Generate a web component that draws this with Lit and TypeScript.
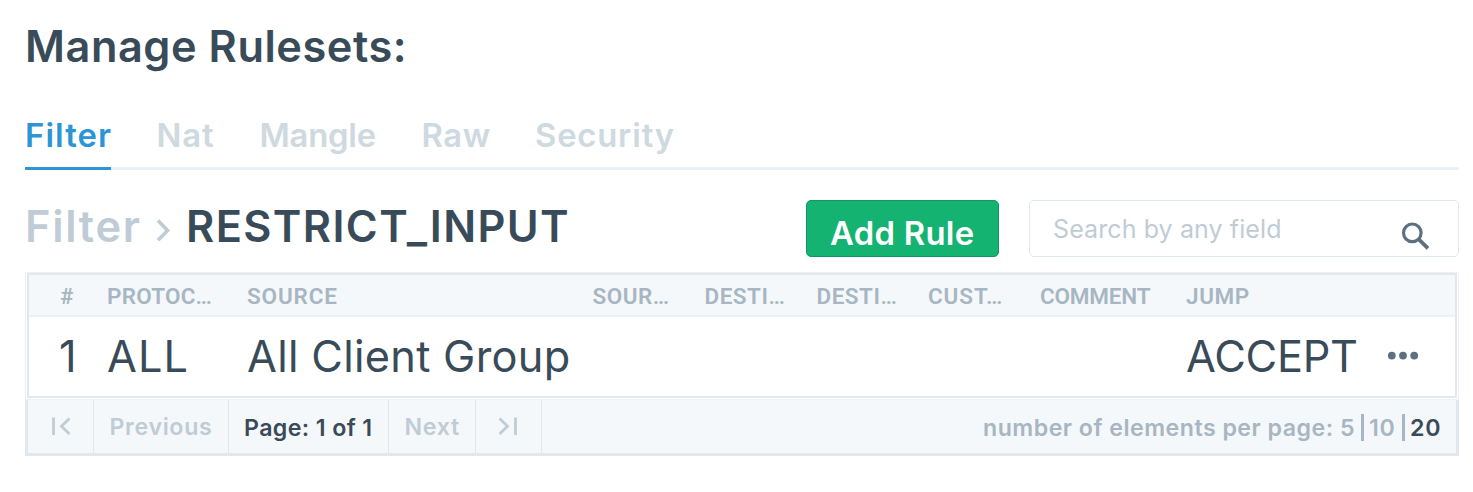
import { LitElement, html, css } from "lit";
import { customElement, state } from "lit/decorators.js";
import { classMap } from "lit/directives/class-map.js";

@customElement("app-root")
export class AppRoot extends LitElement {
  static styles = css`
    * { box-sizing: border-box; }
    :host {
      box-sizing: border-box;
      display: block; width: 1473px; height: 492px; overflow: hidden; background: #fff;
      padding: 20px 14px 0 25px; color: #394b59;
      font-family: Inter, Roboto, "Liberation Sans", sans-serif;
      white-space: nowrap;
    }
    svg { display: block; }
    h1 { margin: 0; font-size: 43.3px; font-weight: 600; line-height: 52px; letter-spacing: .55px; }
    .tabs {
      display: grid; grid-template-columns: 131.5px 103px 162px 113.5px auto; margin-top: 38px; height: 60px;
      box-shadow: inset 0 -3px #ebf1f5; font-size: 32.8px; font-weight: 600; line-height: 50px; color: #ced9e0;
    }
    .tab.active { width: 86px; color: #2b95d6; border-bottom: 3px solid #2b95d6; }
    .filter { letter-spacing: 1.1px; }
    .nat { letter-spacing: .9px; }
    .mangle { letter-spacing: -.2px; }
    .raw { letter-spacing: .6px; }
    .security { letter-spacing: .8px; }

    .bar { display: flex; margin-top: 30px; height: 57px; }
    .crumbs { display: flex; width: 781px; font-size: 43.3px; font-weight: 600; line-height: 52px; }
    .parent { width: 131px; color: #bfccd6; letter-spacing: 1.7px; }
    .sep { width: 30px; padding-top: 19px; }
    .chain { letter-spacing: 1.4px; }
    .add {
      width: 193px; height: 57px; margin: 0 30px 0 0; padding: 8px 0 0 23px; border: 1px solid #0f9960; border-radius: 5px;
      background: #15b371; color: #fff; font: 600 32.8px/48px Inter, sans-serif; letter-spacing: .3px; text-align: left;
    }
    .search {
      display: flex; justify-content: space-between; width: 430px; border: 1px solid #e1e8ed; border-radius: 5px;
      padding: 0 27px 0 23px; font-size: 25px; line-height: 56px; color: #bfccd6; letter-spacing: .1px;
    }
    .search svg { margin-top: 20px; }

    .frame { margin-top: 15px; height: 128px; border: 1px solid #ebf1f5; padding: 0 1px 1px; }
    .table { height: 125px; border: 2px solid #e1e8ed; }
    .row { display: grid; grid-template-columns: 47px 140px 345.5px 112px 112px 111.5px 112px 146px 201px 1fr; padding-left: 31px; }
    .head {
      height: 42px; background: #f5f8fa; border-bottom: 2px solid #ebf1f5; color: #a7b6c2;
      font: 600 22.5px/42px Roboto, sans-serif;
    }
    .protocol { letter-spacing: .2px; }
    .source { letter-spacing: .85px; }
    .wide { letter-spacing: .5px; }
    .custom { letter-spacing: .9px; }
    .comment { letter-spacing: -.2px; }
    .jump { letter-spacing: .6px; }
    .rule { height: 79px; font-size: 43.3px; line-height: 79px; }
    .num { margin-left: -1px; }
    .proto { letter-spacing: 1.1px; }
    .src { letter-spacing: .3px; }
    .target { letter-spacing: -.24px; }
    .more { padding-top: 34px; }

    .pager {
      display: flex; height: 56px; border: 3px solid #e1e8ed; border-top: 0; background: #f5f8fa;
      font-size: 23.2px; font-weight: 600; line-height: 54px; color: #bfccd6;
    }
    .cell { border-right: 1px solid #e1e8ed; padding-left: 15.5px; }
    .first { width: 66px; padding: 17px 0 0 23px; }
    .prev { width: 135px; letter-spacing: .65px; }
    .page { width: 160px; letter-spacing: .38px; color: #394b59; line-height: 56px; padding-left: 15px; }
    .next { width: 87px; letter-spacing: .7px; }
    .last { width: 66px; padding: 17px 0 0 22px; }
    .sizes {
      display: grid; grid-template-columns: 357px 18px 11px 30px 11px 32px; margin-left: auto; padding-right: 14px;
      line-height: 56px; color: #a7b6c2;
    }
    .label { letter-spacing: .48px; }
    .ten { letter-spacing: .8px; }
    .twenty { letter-spacing: .8px; }
    .chosen { color: #394b59; }
    .rule-bar { width: 3px; height: 27px; margin: 14px 0 0 3px; background: #a7b6c2; }
  `;

  @state() private tab = "Filter";
  @state() private size = 20;

  private columns: [string, string][] = [
    ["#", "hash"], ["PROTOC…", "protocol"], ["SOURCE", "source"], ["SOUR…", "wide"], ["DESTI…", "wide"],
    ["DESTI…", "wide"], ["CUST…", "custom"], ["COMMENT", "comment"], ["JUMP", "jump"],
  ];

  private pick(n: number, name: string) {
    return html`<span class=${classMap({ [name]: true, chosen: this.size === n })} @click=${() => (this.size = n)}>${n}</span>`;
  }

  render() {
    return html`
      <h1>Manage Rulesets:</h1>
      <nav class="tabs">
        ${["Filter", "Nat", "Mangle", "Raw", "Security"].map((t) => html`<span
          class=${classMap({ tab: true, [t.toLowerCase()]: true, active: this.tab === t })}
          @click=${() => (this.tab = t)}>${t}</span>`)}
      </nav>
      <div class="bar">
        <div class="crumbs">
          <span class="parent">Filter</span>
          <span class="sep"><svg width="16" height="23" viewBox="0 0 16 23" fill="none" stroke="#bfccd6" stroke-width="3.6"><path d="M2 1.6 11.6 11.4 2 21.2"/></svg></span>
          <span class="chain">RESTRICT_INPUT</span>
        </div>
        <button class="add">Add Rule</button>
        <div class="search">
          <span>Search by any field</span>
          <svg width="30" height="30" viewBox="0 0 30 30" fill="none" stroke="#5c7080" stroke-width="3.2"><circle cx="11.3" cy="11.8" r="8.8"/><path d="m17.8 18.3 9.2 9" stroke-width="3.8"/></svg>
        </div>
      </div>
      <div class="frame">
        <div class="table">
          <div class="row head">${this.columns.map(([label, cls]) => html`<span class=${cls}>${label}</span>`)}</div>
          <div class="row rule">
            <span class="num">1</span><span class="proto">ALL</span><span class="src">All Client Group</span>
            <span></span><span></span><span></span><span></span><span></span>
            <span class="target">ACCEPT</span>
            <span class="more"><svg width="32" height="10" viewBox="0 0 32 10" fill="#5c7080"><circle cx="4.8" cy="4.6" r="3.9"/><circle cx="16" cy="4.6" r="3.9"/><circle cx="27.2" cy="4.6" r="3.9"/></svg></span>
          </div>
        </div>
      </div>
      <div class="pager">
        <span class="cell first"><svg width="20" height="19" viewBox="0 0 20 19" fill="none" stroke="#bfccd6"><path d="M2.5 .5v17.5" stroke-width="2.8"/><path d="M18.5 1.5 10.5 9.3l8 7.8" stroke-width="2.8"/></svg></span>
        <span class="cell prev">Previous</span>
        <span class="cell page">Page: 1 of 1</span>
        <span class="cell next">Next</span>
        <span class="cell last"><svg width="20" height="19" viewBox="0 0 20 19" fill="none" stroke="#bfccd6"><path d="M17.5 .5v17.5" stroke-width="2.8"/><path d="m1.5 1.5 8 7.8-8 7.8" stroke-width="2.8"/></svg></span>
        <div class="sizes">
          <span class="label">number of elements per page:</span>
          ${this.pick(5, "five")}<span class="rule-bar"></span>${this.pick(10, "ten")}<span class="rule-bar"></span>${this.pick(20, "twenty")}
        </div>
      </div>`;
  }
}
